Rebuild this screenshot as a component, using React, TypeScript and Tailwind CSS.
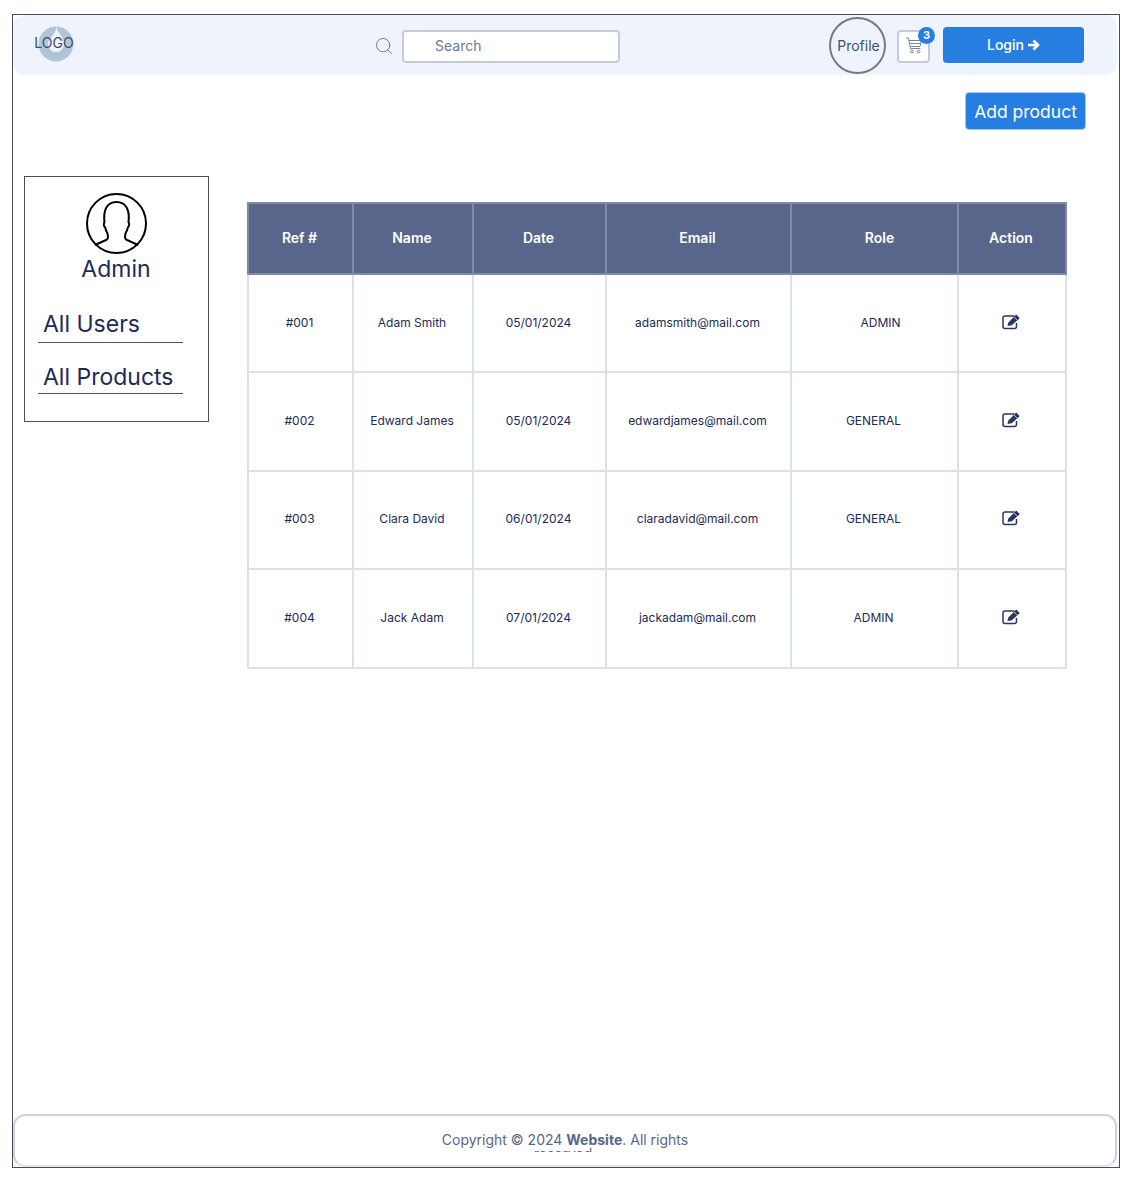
import React from 'react';
import { Search } from 'lucide-react';

const rows = [
  { ref: '#001', name: 'Adam Smith', date: '05/01/2024', email: 'adamsmith@mail.com', role: 'ADMIN', shift: true, h: 'h-[98px]' },
  { ref: '#002', name: 'Edward James', date: '05/01/2024', email: 'edwardjames@mail.com', role: 'GENERAL', shift: false, h: 'h-[99px] [&>td]:pb-[2px]' },
  { ref: '#003', name: 'Clara David', date: '06/01/2024', email: 'claradavid@mail.com', role: 'GENERAL', shift: false, h: 'h-[98px] [&>td]:pb-[2px]' },
  { ref: '#004', name: 'Jack Adam', date: '07/01/2024', email: 'jackadam@mail.com', role: 'ADMIN', shift: false, h: 'h-[99px] [&>td]:pb-[2px]' },
];

const Logo = () => (
  <div className="relative w-[40px] h-[36px] flex items-center justify-center">
    <svg viewBox="0 0 36 36" className="absolute left-[4px] top-0 w-[36px] h-[36px]">
      <circle cx="18" cy="18" r="17.500" fill="#b1c5d9" />
      <path d="M18.500 0C18.500 6 26 10 26 18a8 8 0 1 1-16 0c0-6 8-9 8.500-18z" fill="#eff4fc" />
    </svg>
    <span className="relative text-sm text-[#3f4a6b] -mt-[3px]">LOGO</span>
  </div>
);

const AdminAvatar = () => (
  <svg viewBox="0 0 62 62" className="w-[62px] h-[62px]" fill="none" stroke="#000" strokeWidth="2">
    <circle cx="30.500" cy="30.500" r="29.500" />
    <path
      d="M9 52L20 47C22 46 22.500 45 21.500 40.500C20 38 19.500 36 19 34C17.500 33.500 17.500 30 18.500 29.500C17 17 21 9 30.500 9C40 9 44 17 42.500 29.500C43.500 30 43.500 33.500 42 34C41.500 36 41 38 39.500 40.500C38.500 45 39 46 41 47L52 52"
      strokeLinejoin="round"
    />
  </svg>
);

const CartIcon = () => (
  <svg viewBox="0 0 18 18" className="w-[18px] h-[18px]" fill="none" stroke="#7b8499" strokeWidth="1">
    <path d="M1 1h2.500l2 10.500h10" />
    <path d="M3.900 3.500H16.500l-1.500 6H5.200" />
    <path d="M4.500 6.500h11.300" />
    <circle cx="7" cy="14.500" r="1.400" />
    <circle cx="13.500" cy="14.500" r="1.400" />
  </svg>
);

const ArrowIcon = () => (
  <svg viewBox="0 0 12 12" className="w-[12px] h-[12px]" fill="none" stroke="#fff" strokeWidth="2.600">
    <path d="M0 6h9.500M5.500 1.500L10 6l-4.500 4.500" />
  </svg>
);

const EditIcon = () => (
  <svg viewBox="0 0 18 16" className="mx-auto -mt-[2px] w-[18px] h-[16px]">
    <path
      d="M12.500 2H3a2 2 0 0 0-2 2v8.500a2 2 0 0 0 2 2h9.500a2 2 0 0 0 2-2V9"
      fill="none"
      stroke="#2b3763"
      strokeWidth="1.500"
    />
    <path d="M5.500 12l.8-3.600L13.500 1.200c.5-.5 1-.5 1.500 0l2.200 2.200c.4.500.4 1 0 1.400L9.800 11.300z" fill="#2b3763" />
    <path d="M12 3l3.300 3.300" stroke="#fff" strokeWidth="0.700" />
  </svg>
);

export default function App() {
  return (
    <div className="bg-white w-[1132px] h-[1188px] pt-[14px] pl-3 font-['Inter',sans-serif]">
      <div className="w-[1108px] h-[1154px] border border-[#4a4d55] flex flex-col overflow-hidden">
        <header className="w-[1104px] h-[60px] shrink-0 bg-[#eff4fc] rounded-xl flex items-center">
          <div className="ml-[21px] -mt-[2px]">
            <Logo />
          </div>
          <Search className="ml-[300px] mt-[2px] w-[20px] h-[20px] text-[#6f7a95]" strokeWidth={1.2} />
          <div className="ml-[8px] mt-[2px] w-[218px] h-[33px] bg-white border-2 border-[#c5cbdc] rounded flex items-center pl-[31px] text-sm text-[#6e7896]">
            Search
          </div>
          <div className="ml-[209px] w-[57px] h-[57px] rounded-full border-2 border-[#777b80] flex items-center justify-center text-sm text-[#434f72] pl-[2px] pt-[1px]">
            Profile
          </div>
          <div className="relative ml-[11px] mt-[2px] w-[33px] h-[33px] bg-white border-2 border-[#c5cbdc] rounded flex items-center justify-center">
            <CartIcon />
            <span className="absolute -top-[5px] -right-[7px] w-[17px] h-[17px] rounded-full bg-[#267fe0] text-white text-[11px] font-bold flex items-center justify-center">
              3
            </span>
          </div>
          <button className="ml-[13px] w-[141px] h-[36px] bg-[#267fe0] rounded text-white text-sm font-medium flex items-center justify-center gap-1 pb-[1px]">
            Login <ArrowIcon />
          </button>
        </header>

        <div className="flex justify-end pr-[33px] pt-[17px] shrink-0">
          <button className="w-[121px] h-[38px] bg-[#267fe0] border border-[#9cc5f0] rounded text-white text-[17.5px] pt-[2px]">
            Add product
          </button>
        </div>

        <div className="flex items-start flex-1 pl-[11px] pt-[46px]">
          <aside className="w-[185px] h-[246px] shrink-0 border border-[#4a4d55] flex flex-col">
            <div className="flex justify-center mt-[16px]">
              <AdminAvatar />
            </div>
            <div className="text-center text-[23px] leading-[28px] text-[#1c2a5a] -ml-[1px]">Admin</div>
            <div className="mt-[22px] ml-[13px] w-[145px] h-[38px] border-b border-[#555] pl-[5px] text-[23px] leading-[38px] text-[#1c2a5a]">
              All Users
            </div>
            <div className="mt-[14px] ml-[13px] w-[145px] h-[37px] border-b border-[#555] pl-[5px] text-[23px] leading-[41px] text-[#1c2a5a]">
              All Products
            </div>
          </aside>

          <table className="ml-[38px] mt-[26px] w-[818px] table-fixed border-collapse text-[12px] text-[#1c2a5a]">
            <colgroup>
              <col className="w-[105px]" />
              <col className="w-[120px]" />
              <col className="w-[133px]" />
              <col className="w-[185px]" />
              <col className="w-[167px]" />
              <col className="w-[108px]" />
            </colgroup>
            <thead>
              <tr className="h-[71px] bg-[#58668b] text-white text-[14px]">
                <th className="border-2 border-[#7f8aa8] font-semibold pb-[3px] pr-[2px]">Ref #</th>
                <th className="border-2 border-[#7f8aa8] font-semibold pb-[3px] pr-[2px]">Name</th>
                <th className="border-2 border-[#7f8aa8] font-semibold pb-[3px] pr-[2px]">Date</th>
                <th className="border-2 border-[#7f8aa8] font-semibold pb-[3px] pr-[2px]">Email</th>
                <th className="border-2 border-[#7f8aa8] font-semibold pb-[3px] pl-[10px]">Role</th>
                <th className="border-2 border-[#7f8aa8] font-semibold pb-[3px] pr-[2px]">Action</th>
              </tr>
            </thead>
            <tbody>
              {rows.map(row => (
                <tr key={row.ref} className={row.h}>
                  <td className="border-2 border-[#dce0ed] text-center pr-[2px]">{row.ref}</td>
                  <td className="border-2 border-[#dce0ed] text-center pr-[2px]">{row.name}</td>
                  <td className="border-2 border-[#dce0ed] text-center pr-[2px]">{row.date}</td>
                  <td className="border-2 border-[#dce0ed] text-center pr-[2px]">{row.email}</td>
                  <td className={row.shift ? 'border-2 border-[#dce0ed] text-center pl-3' : 'border-2 border-[#dce0ed] text-center pr-[2px]'}>
                    {row.role}
                  </td>
                  <td className="border-2 border-[#dce0ed] pr-[2px]">
                    <EditIcon />
                  </td>
                </tr>
              ))}
            </tbody>
          </table>
        </div>

        <footer className="w-[1104px] h-[53px] shrink-0 border-2 border-[#ccd2e3] border-b-[#e1e5ef] rounded-xl overflow-hidden flex justify-center pt-[17px]">
          <p className="w-[280px] h-[19px] overflow-hidden text-center text-sm leading-[14px] text-[#58668b]">
            Copyright © 2024 <span className="font-bold">Website</span>. All rights reserved.
          </p>
        </footer>
      </div>
    </div>
  );
}
